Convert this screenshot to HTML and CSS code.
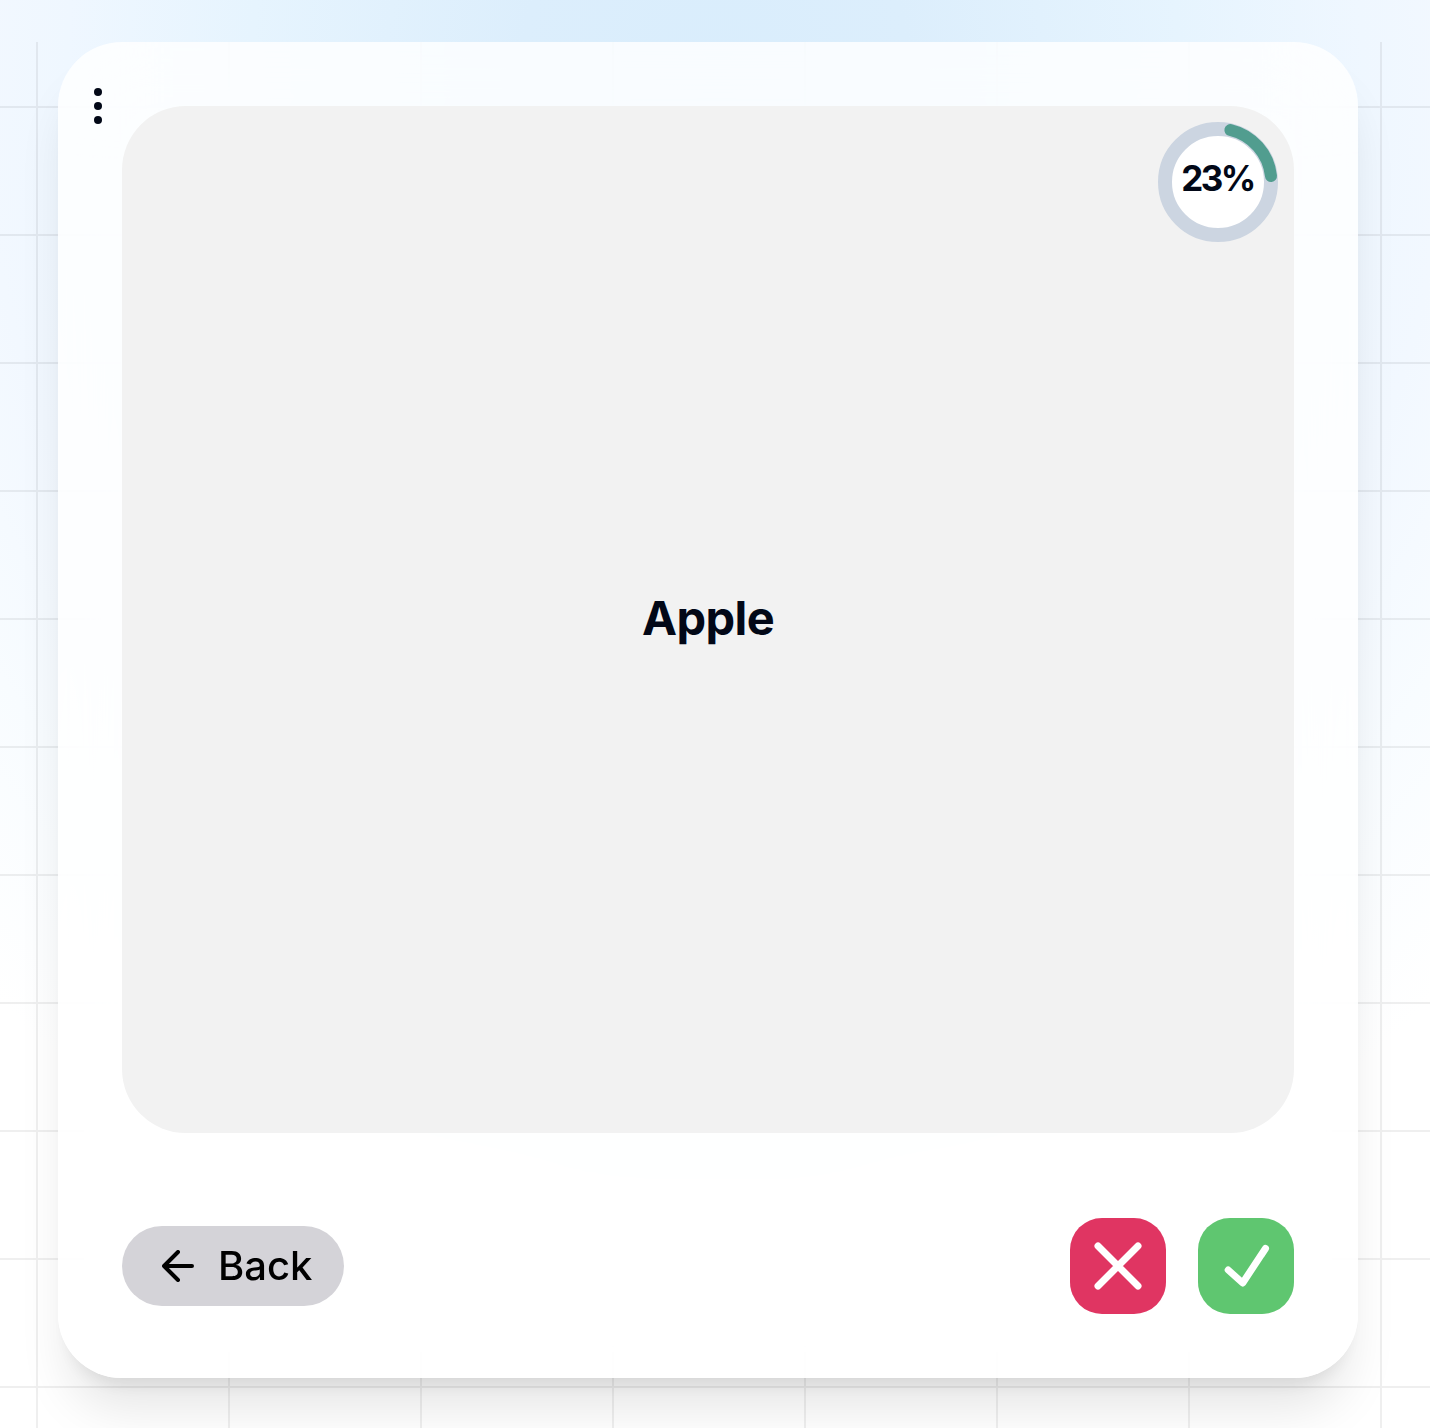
FILE: index.html
```
<!DOCTYPE html>
<html lang="en">
<head>
<meta charset="utf-8">
<title>Flashcards</title>
<link rel="stylesheet" href="styles.css">
</head>
<body>
<main class="page">
  <section class="card">
    <button class="menu" aria-label="Menu">
      <svg width="8" height="36" viewBox="0 0 8 36"><circle cx="4" cy="4" r="4"/><circle cx="4" cy="18" r="4"/><circle cx="4" cy="32" r="4"/></svg>
    </button>
    <div class="face">
      <span class="word">Apple</span>
      <div class="progress">
        <svg class="ring" width="120" height="120" viewBox="0 0 120 120" fill="none">
          <circle cx="60" cy="60" r="53" fill="#fff" stroke="#ccd5e1" stroke-width="14"/>
          <path d="M72.4 8A53.4 53.4 0 0 1 113 54" stroke="#519d8f" stroke-width="12" stroke-linecap="round"/>
        </svg>
        <span class="percent">23%</span>
      </div>
    </div>
    <div class="actions">
      <button class="back">
        <svg width="32" height="32" viewBox="0 0 32 32" fill="none" stroke="#000" stroke-width="4" stroke-linecap="round" stroke-linejoin="round"><path d="M30 16H2M16 2L2 16l14 14"/></svg>
        <span class="label">Back</span>
      </button>
      <div class="answers">
        <button class="answer wrong" aria-label="Wrong">
          <svg width="96" height="96" viewBox="0 0 96 96"><path d="M28 28L68 68M68 28L28 68"/></svg>
        </button>
        <button class="answer right" aria-label="Right">
          <svg width="96" height="96" viewBox="0 0 96 96"><path d="M30.2 52L44.7 65L67.5 30.5"/></svg>
        </button>
      </div>
    </div>
  </section>
</main>
</body>
</html>
```
FILE: styles.css
```
* { box-sizing: border-box; }
body {
  margin: 0;
  height: 1428px;
  overflow: hidden;
  color: #020817;
  font-family: Inter, "Liberation Sans", sans-serif;
  background: radial-gradient(1080px 1230px at 715px 80px, #d9edfc 0, #dceefc 18%, #e6f4fe 43%, #eff7ff 60%, #f2f8ff 68%, #f8fcff 82%, #fff 100%);
}
button { border: 0; padding: 0; font: inherit; color: inherit; background: none; }
svg { display: block; }
.page {
  position: relative;
  height: 1428px;
  padding: 42px 72px 50px 58px;
}
/* Grid lines, faded as one layer so that crossings keep an even tone */
.page::before {
  content: "";
  position: absolute;
  inset: 0;
  opacity: .06;
  background:
    linear-gradient(90deg, #000 2px, transparent 2px) 36px 42px / 192px 1428px repeat-x,
    linear-gradient(#000 2px, transparent 2px) 0 106px / 1430px 128px;
}
.card {
  position: relative;
  height: 1336px;
  padding: 64px;
  border-radius: 64px;
  background: rgba(255, 255, 255, .82);
  backdrop-filter: blur(48px);
  box-shadow: 0 40px 50px -10px rgba(0, 0, 0, .1), 0 16px 20px -12px rgba(0, 0, 0, .1);
}
.menu { position: absolute; left: 36px; top: 46px; fill: #020817; }
.face {
  position: relative;
  height: 1027px;
  display: flex;
  align-items: center;
  justify-content: center;
  border-radius: 64px;
  background: #f2f2f2;
}
.word { font-size: 47px; line-height: 64px; font-weight: 650; letter-spacing: -.6px; padding-bottom: 3px; }
.progress {
  position: absolute;
  right: 16px;
  top: 16px;
  width: 120px;
  height: 120px;
  display: grid;
  place-items: center;
}
.ring, .percent { grid-area: 1 / 1; }
.percent { font-size: 35px; line-height: 40px; font-weight: 650; padding: 0 1px 8px 0; letter-spacing: -2.5px; }
.actions { display: flex; align-items: center; justify-content: space-between; margin-top: 85px; }
.back {
  display: flex;
  align-items: center;
  gap: 24px;
  width: 222px;
  height: 80px;
  padding-left: 40px;
  border-radius: 40px;
  background: #d4d3d8;
  color: #000;
}
.label { font-size: 40px; line-height: 56px; font-weight: 450; }
.answers { display: flex; gap: 32px; }
.answer { width: 96px; height: 96px; border-radius: 32px; }
.answer svg { fill: none; stroke: #fff; stroke-width: 7; stroke-linecap: round; stroke-linejoin: round; }
.wrong { background: #e03562; }
.right { background: #5fc670; }
```
